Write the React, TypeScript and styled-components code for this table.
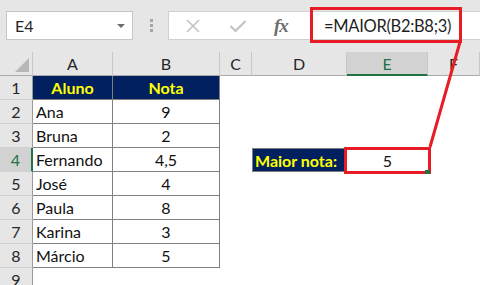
import React from 'react';
import styled, { createGlobalStyle, css } from 'styled-components';

const GlobalStyle = createGlobalStyle`
    html, body {
        margin: 0;
        padding: 0;
        background: #ffffff;
        overflow: hidden;
    }
    body {
        font-family: Lato, "Liberation Sans", sans-serif;
    }
`
const Page = styled.div`
    position: relative;
    width: 480px;
    height: 285px;
    overflow: hidden;
`
const Toolbar = styled.div`
    display: flex;
    align-items: flex-start;
    height: 52px;
    padding-top: 11px;
    box-sizing: border-box;
    background: #e6e6e6;
`
const NameBox = styled.div`
    display: flex;
    align-items: center;
    justify-content: space-between;
    margin-left: 6px;
    width: 127px;
    height: 29px;
    box-sizing: border-box;
    padding: 0 7px 0 8px;
    background: #ffffff;
    border: 1px solid #c6c6c6;
    font-size: 16px;
    color: #262626;
`
const Caret = styled.span`
    width: 0;
    height: 0;
    border-left: 4px solid transparent;
    border-right: 4px solid transparent;
    border-top: 4px solid #6d6d6d;
`
const Grip = styled.div`
    display: flex;
    flex-direction: column;
    gap: 2px;
    margin: 8px 15px 0 17px;
    span {
        width: 3px;
        height: 3px;
        background: #a6a6a6;
    }
`
const ActionBox = styled.div`
    display: flex;
    align-items: center;
    width: 142px;
    height: 29px;
    box-sizing: border-box;
    padding-left: 16px;
    gap: 28px;
    background: #ffffff;
    border: 1px solid #d0d0d0;
    border-right: none;
`
const Fx = styled.span`
    margin-left: -1px;
    font-family: "Liberation Serif", serif;
    font-style: italic;
    font-weight: 700;
    font-size: 19px;
    color: #6e6e6e;
    letter-spacing: -1px;
`
const FormulaInput = styled.div`
    position: relative;
    flex: 1;
    display: flex;
    align-items: center;
    height: 29px;
    box-sizing: border-box;
    padding-left: 13px;
    background: #ffffff;
    border: 1px solid #d0d0d0;
    border-right: none;
    font-size: 16.5px;
    letter-spacing: -0.3px;
    color: #1f1f1f;
`
const Highlight = styled.div`
    position: absolute;
    left: -1px;
    top: -5px;
    width: 152px;
    height: 36px;
    box-sizing: border-box;
    border: 3px solid #e81c24;
`
const Sheet = styled.div`
    display: grid;
    grid-template-columns: 33px 80px 107px 32px 95px 81px 1fr;
    grid-auto-rows: 24px;
    font-size: 16px;
    color: #111111;
`
const ColHead = styled.div<{ $active?: boolean }>`
    display: flex;
    align-items: center;
    justify-content: center;
    box-sizing: border-box;
    background: #e6e6e6;
    border-right: 1px solid #c8c8c8;
    border-bottom: 1px solid #ababab;
    color: #262626;
    ${p => p.$active && css`
        background: #d2d2d2;
        color: #217346;
        border-bottom: 2px solid #217346;
    `}
`
const Corner = styled(ColHead)`
    position: relative;
    &::after {
        content: '';
        position: absolute;
        right: 3px;
        bottom: 3px;
        border-left: 14px solid transparent;
        border-bottom: 14px solid #b7b7b7;
    }
`
const RowHead = styled.div<{ $active?: boolean }>`
    display: flex;
    align-items: center;
    justify-content: center;
    box-sizing: border-box;
    background: #e6e6e6;
    border-right: 1px solid #9b9b9b;
    border-bottom: 1px solid #d0d0d0;
    color: #262626;
    ${p => p.$active && css`
        background: #d2d2d2;
        color: #217346;
        border-right: 2px solid #217346;
    `}
`
const Cell = styled.div<{ $align?: 'left' | 'center'; $boxed?: boolean; $head?: boolean }>`
    display: flex;
    align-items: center;
    justify-content: ${p => (p.$align === 'center' ? 'center' : 'flex-start')};
    padding-left: ${p => (p.$align === 'center' ? '0' : '3px')};
    box-sizing: border-box;
    white-space: nowrap;
    ${p => p.$boxed && css`
        border-right: 1px solid #808080;
        border-bottom: 1px solid #808080;
    `}
    ${p => p.$head && css`
        background: #002060;
        color: #ffff00;
        font-weight: 700;
    `}
`
const LabelCell = styled(Cell)`
    background: #002060;
    color: #ffff00;
    font-weight: 700;
    border: 1px solid #808080;
    border-right: none;
    padding-left: 2px;
`
const ResultCell = styled(Cell)`
    position: relative;
    &::before {
        content: '';
        position: absolute;
        top: -1px;
        left: -3px;
        right: -3px;
        bottom: -2px;
        border: 3px solid #e81c24;
    }
    &::after {
        content: '';
        position: absolute;
        right: -2px;
        bottom: -2px;
        width: 5px;
        height: 4px;
        background: #217346;
    }
`
const Connector = styled.svg`
    position: absolute;
    left: 0;
    top: 0;
    pointer-events: none;
`

const columns = ['A', 'B', 'C', 'D', 'E', 'F'];

const alunos: [string, string][] = [
    ['Ana', '9'],
    ['Bruna', '2'],
    ['Fernando', '4,5'],
    ['José', '4'],
    ['Paula', '8'],
    ['Karina', '3'],
    ['Márcio', '5'],
];

const CancelIcon = () => (
    <svg width="16" height="16" viewBox="0 0 16 16">
        <path d="M2 2 L14 14 M14 2 L2 14" stroke="#c3c3c3" strokeWidth="1.6" fill="none" />
    </svg>
);

const EnterIcon = () => (
    <svg width="18" height="14" viewBox="0 0 18 14">
        <path d="M1.5 7 L6.5 12 L16.5 2" stroke="#c3c3c3" strokeWidth="2.2" fill="none" />
    </svg>
);

function emptyRow(row: number) {
    return (
        <React.Fragment key={row}>
            <RowHead>{row}</RowHead>
            <Cell />
            <Cell />
            <Cell />
            <Cell />
            <Cell />
            <Cell />
        </React.Fragment>
    );
}

export default function App() {
    return (
        <Page>
            <GlobalStyle />
            <Toolbar>
                <NameBox>
                    <span>E4</span>
                    <Caret />
                </NameBox>
                <Grip>
                    <span />
                    <span />
                    <span />
                </Grip>
                <ActionBox>
                    <CancelIcon />
                    <EnterIcon />
                    <Fx>fx</Fx>
                </ActionBox>
                <FormulaInput>
                    <Highlight />
                    {'=MAIOR(B2:B8;3)'}
                </FormulaInput>
            </Toolbar>
            <Sheet>
                <Corner />
                {columns.map(c => (
                    <ColHead key={c} $active={c === 'E'}>{c}</ColHead>
                ))}

                <RowHead>1</RowHead>
                <Cell $align="center" $boxed $head>Aluno</Cell>
                <Cell $align="center" $boxed $head>Nota</Cell>
                <Cell />
                <Cell />
                <Cell />
                <Cell />

                {alunos.map(([nome, nota], i) => (
                    <React.Fragment key={nome}>
                        <RowHead $active={i + 2 === 4}>{i + 2}</RowHead>
                        <Cell $boxed>{nome}</Cell>
                        <Cell $align="center" $boxed>{nota}</Cell>
                        <Cell />
                        {i + 2 === 4 ? (
                            <>
                                <LabelCell>Maior nota:</LabelCell>
                                <ResultCell $align="center">5</ResultCell>
                            </>
                        ) : (
                            <>
                                <Cell />
                                <Cell />
                            </>
                        )}
                        <Cell />
                    </React.Fragment>
                ))}

                {emptyRow(9)}
            </Sheet>
            <Connector width="480" height="285">
                <line x1="460" y1="42" x2="430" y2="147" stroke="#e81c24" strokeWidth="3" />
            </Connector>
        </Page>
    );
}
